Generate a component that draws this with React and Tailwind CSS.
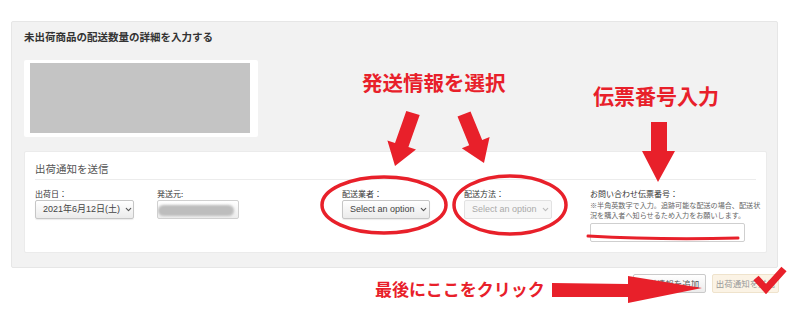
import { ChevronDown } from "lucide-react";

const RED = "#e8202a";

const Select = ({ children, disabled, className = "" }) => (
  <div
    className={`h-[19px] flex items-center justify-between gap-[4px] whitespace-nowrap rounded-[2px] border px-[7px] text-[9px] font-['Liberation_Sans','Noto_Sans_CJK_JP',sans-serif] ${
      disabled
        ? "border-[#e2e2e2] bg-[#f7f7f7] text-[#aaa]"
        : "border-[#c6c6c6] bg-linear-to-b from-white to-[#ebebeb] text-[#444] shadow-[0_1px_1px_rgba(0,0,0,0.08)]"
    } ${className}`}
  >
    <span className="leading-none">{children}</span>
    <ChevronDown size={9} strokeWidth={3} className={`shrink-0 ${disabled ? "text-[#bbb]" : "text-[#555]"}`} />
  </div>
);

const Label = ({ children }) => (
  <div className="h-[11px] mb-[1px] text-[8px] leading-[11px] text-[#333] whitespace-nowrap">{children}</div>
);

const Annotations = () => (
  <>
    <svg
      className="absolute left-0 top-0 pointer-events-none"
      width="800"
      height="314"
      viewBox="0 0 800 314"
    >
      {/* down arrows */}
      <polygon
        fill={RED}
        points="406.3,110.9 419.7,115.1 408.4,147.1 416,149.6 395,166 387.4,140.4 395,142.9"
      />
      <polygon
        fill={RED}
        points="457.5,116.6 470.5,111.4 482.2,140 489.6,136.9 484,163 461.8,148.3 469.2,145.2"
      />
      <polygon fill={RED} points="651,122 667,122 667,151 675,151 658,182 642,151 651,151" />

      {/* circles */}
      <ellipse cx="384" cy="205" rx="62" ry="28" fill="none" stroke={RED} strokeWidth="3.5" />
      <ellipse cx="510" cy="205" rx="56" ry="29" fill="none" stroke={RED} strokeWidth="3.5" />

      {/* underline */}
      <path d="M588 236 Q 660 240 738 238" fill="none" stroke={RED} strokeWidth="3" strokeLinecap="round" />

      {/* big arrow */}
      <polygon fill={RED} points="552,283 628,284 628,276 702,288 628,303 628,297 552,297" />

      {/* check */}
      <polyline points="756,278 766,289 784,269" fill="none" stroke={RED} strokeWidth="7" />
    </svg>

    <div
      className="absolute left-[362px] top-[72px] text-[20.5px] font-bold leading-none whitespace-nowrap"
      style={{ color: RED }}
    >
      発送情報を選択
    </div>
    <div
      className="absolute left-[593px] top-[85px] text-[21px] font-bold leading-none whitespace-nowrap"
      style={{ color: RED }}
    >
      伝票番号入力
    </div>
    <div
      className="absolute left-[375px] top-[280px] text-[17px] font-bold leading-none whitespace-nowrap"
      style={{ color: RED }}
    >
      最後にここをクリック
    </div>
  </>
);

export default function App() {
  return (
    <div className="relative w-[800px] h-[314px] overflow-hidden bg-white font-['Noto_Sans_CJK_JP','Liberation_Sans',sans-serif]">
      <div className="pt-[21px] pl-[11px]">
        {/* PANEL */}
        <div className="w-[767px] h-[247px] bg-[#f2f2f2] border border-[#e6e6e6] rounded-[2px] pt-[8px] px-[12px]">
          <h2 className="text-[10.5px] leading-[14px] font-bold text-[#333]">
            未出荷商品の配送数量の詳細を入力する
          </h2>

          <div className="mt-[16px] w-[234px] h-[77px] bg-white rounded-[2px] pt-[3px] pl-[6px]">
            <div className="w-[220px] h-[70px] bg-[#c4c4c4]" />
          </div>

          {/* CARD */}
          <div className="mt-[14px] w-[743px] h-[102px] bg-white rounded-[2px] border border-[#ebebeb] pt-[10px] px-[10px]">
            <div className="text-[10.5px] leading-[14px] text-[#555]">出荷通知を送信</div>
            <div className="mt-[3px] h-px bg-[#ececec]" />

            <div className="flex mt-[8px]">
              <div className="w-[122px]">
                <Label>出荷日：</Label>
                <Select className="w-[99px]">2021年6月12日(土)</Select>
              </div>

              <div className="w-[185px]">
                <Label>発送元:</Label>
                <div className="relative w-[82px] h-[19px] rounded-[2px] border border-[#d0d0d0] bg-linear-to-b from-white to-[#ededed] overflow-hidden">
                  <div className="absolute left-0 top-[4px] w-[76px] h-[11px] rounded-full bg-[#bdbdbd] blur-[1px]" />
                </div>
              </div>

              <div className="w-[122px]">
                <Label>配送業者：</Label>
                <Select className="w-[88px]">Select an option</Select>
              </div>

              <div className="w-[126px]">
                <Label>配送方法：</Label>
                <Select disabled className="w-[88px]">Select an option</Select>
              </div>

              <div className="w-[165px]">
                <Label>お問い合わせ伝票番号：</Label>
                <div className="text-[7.1px] leading-[10px] text-[#666] whitespace-nowrap">
                  ※半角英数字で入力。追跡可能な配送の場合、配送状
                  <br />
                  況を購入者へ知らせるため入力をお願いします。
                </div>
                <div className="mt-[3px] w-[155px] h-[19px] rounded-[2px] border border-[#cfcfcf] bg-white" />
              </div>
            </div>
          </div>
        </div>

        {/* FOOTER BUTTONS */}
        <div className="w-[768px] flex justify-end gap-[6px] mt-[6px]">
          <button className="w-[73px] h-[19px] rounded-[2px] border border-[#cacaca] bg-linear-to-b from-white to-[#ececec] text-[8.5px] text-[#555] leading-none">
            配送情報を追加
          </button>
          <button className="w-[67px] h-[19px] rounded-[2px] border border-[#efe3cc] bg-[#fbf3e5] text-[8.5px] text-[#999] leading-none">
            出荷通知を送信
          </button>
        </div>
      </div>

      <Annotations />
    </div>
  );
}
